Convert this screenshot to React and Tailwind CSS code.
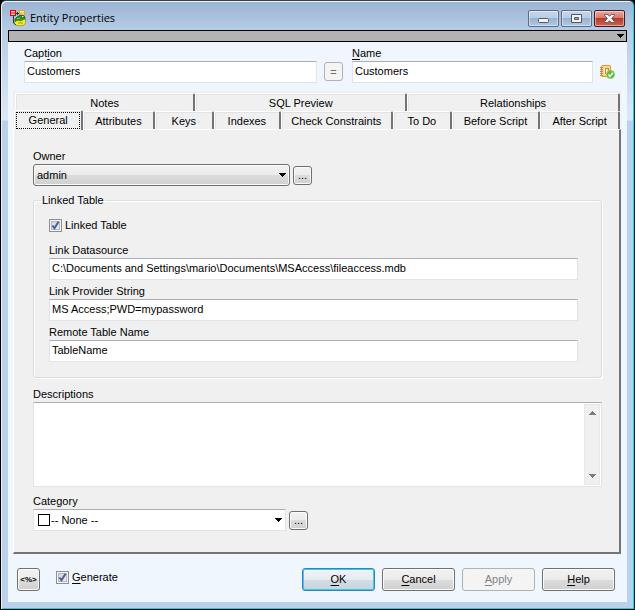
import React from "react";

const topTabs = [
  { label: "Notes", grow: "flex-[180]" },
  { label: "SQL Preview", grow: "flex-[212]" },
  { label: "Relationships", grow: "flex-[213]" },
];

const bottomTabs = [
  { label: "General", grow: "flex-[67]", active: true },
  { label: "Attributes", grow: "flex-[71]" },
  { label: "Keys", grow: "flex-[59]" },
  { label: "Indexes", grow: "flex-[66]" },
  { label: "Check Constraints", grow: "flex-[114]" },
  { label: "To Do", grow: "flex-[58]" },
  { label: "Before Script", grow: "flex-[89]" },
  { label: "After Script", grow: "flex-[80]" },
];

const linkFields = [
  { id: "datasource", label: "Link Datasource", value: "C:\\Documents and Settings\\mario\\Documents\\MSAccess\\fileaccess.mdb" },
  { id: "provider", label: "Link Provider String", value: "MS Access;PWD=mypassword" },
  { id: "remote", label: "Remote Table Name", value: "TableName" },
];

const inputClass =
  "block h-[22px] w-full rounded-[1px] border border-[#e2e3ea] border-t-[#abadb3] bg-white px-0.5 pb-0.5 outline-none";

const buttonFace =
  "rounded-[3px] border border-[#707070] bg-[linear-gradient(#f2f2f2_0%,#ebebeb_50%,#dddddd_50%,#cfcfcf_100%)] shadow-[inset_0_0_0_1px_#fbfbfb]";

function AppIcon() {
  return (
    <svg width="16" height="16" viewBox="0 0 16 16">
      <path d="M3.5 6v7M6 3.5h3M7.5 2v3" stroke="#333" fill="none" />
      <rect x="0.5" y="0.5" width="5" height="5" fill="#ffc4bc" stroke="#e60000" />
      <path d="M1 3h4" stroke="#e60000" />
      <rect x="9.5" y="0.5" width="5" height="5" fill="#ffedb0" stroke="#f0a020" />
      <path d="M10 3h4" stroke="#f0a020" />
      <path d="M5 12V9l2-2 2-1 1-1h3l2 2v4l-3 1z" fill="#2c8f2a" stroke="#123f10" strokeWidth="0.6" />
      <path d="M7 8.5h3" stroke="#7ccb3c" />
      <path d="M12 6.500h1.500" stroke="#f4fa8a" />
      <path d="M4.500 12l3-1.500 3 .5 4.500-2 .5 1.500v2.500l-2 2.500H7l-2.500-1.500z" fill="#f6ee20" stroke="#77700c" strokeWidth="0.5" />
      <path d="M8 13h5" stroke="#a39b10" />
      <path d="M3 12.500l3 2.500" stroke="#1d5a16" />
    </svg>
  );
}

function NoteCheckIcon() {
  return (
    <svg width="15" height="14" viewBox="0 0 15 14">
      <rect x="1.5" y="0.5" width="9" height="11" rx="1" fill="#fbd58a" stroke="#d99a3c" />
      <path d="M0 2.5h3M0 4.5h3M0 6.5h3M0 8.5h3M0 10.5h3" stroke="#c98a35" />
      <path d="M4.5 3v6M6.5 4v4" stroke="#fff6d8" fill="none" />
      <path d="M5.5 9V3M6 3.5h2.5V6" stroke="#c88632" fill="none" />
      <circle cx="10.5" cy="9.5" r="4" fill="#5cb838" stroke="#8bcf65" />
      <path d="M8.3 9.5l1.7 1.8 2.9-3.6" stroke="#fff" strokeWidth="1.5" fill="none" />
    </svg>
  );
}

function DownArrow({ className }) {
  return (
    <svg className={className} width="8" height="4" viewBox="0 0 8 4" shapeRendering="crispEdges">
      <path d="M0 0h8L4 4z" fill="currentColor" />
    </svg>
  );
}

function CaptionButton({ label, danger, children }) {
  return (
    <button
      aria-label={label}
      className={`flex h-[17px] w-[31px] items-center justify-center rounded-[2px] border shadow-[inset_0_0_0_1px_rgba(255,255,255,0.45)] ${
        danger
          ? "border-[#481a20] bg-[linear-gradient(#e9a99d_0%,#d5796b_45%,#b93b26_50%,#cc6552_100%)]"
          : "border-[#5a6b87] bg-[linear-gradient(#c6d7eb_0%,#b9cde4_45%,#98b2cf_50%,#afc9e5_100%)]"
      }`}
    >
      {children}
    </button>
  );
}

function TickBox({ id, children }) {
  return (
    <div className="flex h-[13px] items-center gap-[3px]">
      <span className="relative block size-[13px]">
        <input
          id={id}
          type="checkbox"
          defaultChecked
          className="peer block size-[13px] appearance-none border border-[#8e8f8f] bg-[linear-gradient(135deg,#cbcfd5,#f3f4f6)] shadow-[inset_0_0_0_1px_#f4f4f4,inset_0_0_0_2px_#b4bac4]"
        />
        <svg className="pointer-events-none absolute inset-0 hidden peer-checked:block" width="13" height="13" viewBox="0 0 13 13">
          <path d="M3.5 6.5L5.5 9.3L9.5 2.8" stroke="#4a5f97" strokeWidth="2" fill="none" />
        </svg>
      </span>
      <label htmlFor={id}>{children}</label>
    </div>
  );
}

function MoreButton({ label }) {
  return (
    <button aria-label={label} className={`h-[19px] w-[19px] leading-3 ${buttonFace}`}>
      ...
    </button>
  );
}

function Tab({ label, grow, active }) {
  return (
    <button
      role="tab"
      aria-selected={!!active}
      className={`min-w-0 whitespace-nowrap rounded-t-[2px] border-t border-r-2 border-l border-t-white border-r-[#747474] border-l-white bg-[#f0f0f0] shadow-[inset_1px_1px_0_#e3e3e3] ${grow} ${
        active ? "relative -mt-px -mb-px h-5 p-px" : "h-[18px] pt-0.5"
      }`}
    >
      {active ? (
        <span className="flex h-[17px] items-center justify-center border border-dotted border-black">{label}</span>
      ) : (
        label
      )}
    </button>
  );
}

function FooterButton({ hotkey, rest, primary, disabled }) {
  return (
    <button
      disabled={disabled}
      className={`h-[23px] w-[73px] rounded-[3px] border ${
        primary
          ? "border-[#3c7fb1] bg-[linear-gradient(#f0f4f6_0%,#e5ecef_50%,#d3dee3_50%,#c6d5dc_100%)] shadow-[inset_0_0_0_1px_#3fc8f4]"
          : disabled
            ? "border-[#adb2b5] bg-[#f4f4f4] text-[#838383]"
            : "border-[#707070] bg-[linear-gradient(#f2f2f2_0%,#ebebeb_50%,#dddddd_50%,#cfcfcf_100%)] shadow-[inset_0_0_0_1px_#fbfbfb]"
      }`}
    >
      <u className="underline-offset-2">{hotkey}</u>
      {rest}
    </button>
  );
}

function TitleBar() {
  return (
    <header className="flex h-7 items-start justify-between">
      <div className="flex h-7 items-center gap-1 pt-1 pl-0.5">
        <AppIcon />
        <h1 className="font-['Open_Sans',sans-serif] text-[11px] leading-4">Entity Properties</h1>
      </div>
      <div className="flex gap-0.5 pt-2 pr-0.5">
        <CaptionButton label="Minimize">
          <svg width="11" height="5" viewBox="0 0 11 5" className="mt-1">
            <rect x="0.5" y="0.5" width="10" height="4" rx="1" fill="#f4f4f4" stroke="#535666" />
          </svg>
        </CaptionButton>
        <CaptionButton label="Maximize">
          <svg width="11" height="9" viewBox="0 0 11 9">
            <path d="M0.5 0.5h10v8h-10zM3.5 3.5h4v2h-4z" fill="#f4f4f4" fillRule="evenodd" stroke="#535666" />
          </svg>
        </CaptionButton>
        <CaptionButton label="Close" danger>
          <svg width="11" height="9" viewBox="0 0 12 10">
            <path d="M0.5 0.5h3.5l2 2 2-2h3.5v1L8.5 5l3 3.5v1H8l-2-2-2 2H0.5v-1l3-3.5-3-3.5z" fill="#f4f4f4" stroke="#535666" />
          </svg>
        </CaptionButton>
      </div>
    </header>
  );
}

export default function App() {
  return (
    <div className="min-h-screen bg-black font-['Liberation_Sans',sans-serif] text-[11px] leading-[13px] text-black">
      <div className="flex min-h-screen flex-col rounded-t-[6px] border border-black border-t-[#3b3f4b] border-r-[#23242b] bg-[linear-gradient(#9ab3d1_0px,#b7cde6_30px,#dce9f8_119px,#b9d1ea_120px)] px-[7px] pt-px pb-[7px] shadow-[inset_1px_1px_0_#e8f2fb,inset_-1px_-1px_0_#35c3e6]">
        <TitleBar />

        <main className="flex flex-1 flex-col bg-[#eff6fe]">
          <div className="flex h-3 justify-end border border-black bg-[#b3b3b3] pt-[3px] pr-0.5">
            <DownArrow />
          </div>

          <section className="flex items-end pt-[5px] pr-3 pl-4">
            <div className="flex-[293]">
              <label htmlFor="caption" className="block pb-px">
                Capt<u className="underline-offset-2">i</u>on
              </label>
              <input id="caption" defaultValue="Customers" className={inputClass} />
            </div>
            <button className="mr-[9px] mb-0.5 ml-[7px] h-[19px] w-[19px] rounded-[3px] border border-[#adb2b5] bg-[#f4f4f4] leading-3 text-[#707070]">
              =
            </button>
            <div className="flex-[241]">
              <label htmlFor="name" className="block pb-px">
                <u className="underline-offset-2">N</u>ame
              </label>
              <input id="name" defaultValue="Customers" className={inputClass} />
            </div>
            <button aria-label="Check name" className="mb-1 ml-[7px]">
              <NoteCheckIcon />
            </button>
          </section>

          <section className="mt-2 mr-[6px] ml-[5px] flex flex-1 flex-col">
            <div role="tablist" className="bg-[#f0f0f0] pt-0.5 pr-px pl-px">
              <div className="flex pl-px">
                {topTabs.map((tab) => (
                  <Tab key={tab.label} {...tab} />
                ))}
              </div>
              <div className="flex">
                {bottomTabs.map((tab) => (
                  <Tab key={tab.label} {...tab} />
                ))}
              </div>
            </div>

            <div className="flex flex-1 flex-col border-t border-r-2 border-b-2 border-l border-t-white border-r-[#747474] border-b-[#747474] border-l-white bg-[#f0f0f0] pt-5 pr-[17px] pb-[21px] pl-[19px]">
              <label htmlFor="owner" className="pb-px">Owner</label>
              <div className="flex items-center gap-[3px]">
                <div className="relative w-[257px]">
                  <select id="owner" className={`block h-[22px] w-full appearance-none pl-[3px] ${buttonFace}`}>
                    <option>admin</option>
                  </select>
                  <DownArrow className="pointer-events-none absolute top-[9px] right-1" />
                </div>
                <MoreButton label="Browse owners" />
              </div>

              <fieldset className="mt-2 rounded-[3px] border border-[#d5dfe5] pr-[23px] pb-[15px] pl-[15px] shadow-[inset_1px_1px_0_#fff,1px_1px_0_#fff]">
                <legend className="-ml-2 px-px">Linked Table</legend>
                <div className="pt-3">
                  <TickBox id="linked">Linked Table</TickBox>
                </div>
                <div className="flex flex-col gap-[5px] pt-3">
                  {linkFields.map(({ id, label, value }) => (
                    <div key={id}>
                      <label htmlFor={id} className="block pb-px">{label}</label>
                      <input id={id} defaultValue={value} className={inputClass} />
                    </div>
                  ))}
                </div>
              </fieldset>

              <label htmlFor="descriptions" className="pt-2.5 pb-px">Descriptions</label>
              <div className="flex min-h-[84px] flex-1 rounded-[1px] border border-[#e2e3ea] border-t-[#abadb3] bg-white p-px">
                <textarea id="descriptions" className="block flex-1 resize-none p-0.5 outline-none" />
                <div className="flex w-4 flex-col items-center justify-between border border-[#e8e8e8] bg-[#f0f0f0] py-[6px] text-[#7c7c7c]">
                  <DownArrow className="rotate-180" />
                  <DownArrow />
                </div>
              </div>

              <label htmlFor="category" className="pt-2 pb-px">Category</label>
              <div className="flex items-center gap-[3px]">
                <div className="relative w-[253px]">
                  <select
                    id="category"
                    className="block h-[22px] w-full appearance-none rounded-[1px] border border-[#e2e3ea] border-t-[#abadb3] bg-white pl-[17px] outline-none"
                  >
                    <option>-- None --</option>
                  </select>
                  <span className="pointer-events-none absolute top-[5px] left-[5px] size-3 border border-black" />
                  <DownArrow className="pointer-events-none absolute top-[9px] right-1" />
                </div>
                <MoreButton label="Browse categories" />
              </div>
            </div>
          </section>

          <footer className="flex items-center pt-[14px] pr-3 pb-[11px] pl-[9px]">
            <button
              aria-label="Edit template"
              className={`flex size-[23px] items-center justify-center text-[8px] font-bold leading-3 ${buttonFace}`}
            >
              &lt;%&gt;
            </button>
            <div className="ml-4 pb-1">
              <TickBox id="generate">
                <u className="underline-offset-2">G</u>enerate
              </TickBox>
            </div>
            <div className="ml-auto flex gap-[7px]">
              <FooterButton hotkey="O" rest="K" primary />
              <FooterButton hotkey="C" rest="ancel" />
              <FooterButton hotkey="A" rest="pply" disabled />
              <FooterButton hotkey="H" rest="elp" />
            </div>
          </footer>
        </main>
      </div>
    </div>
  );
}
